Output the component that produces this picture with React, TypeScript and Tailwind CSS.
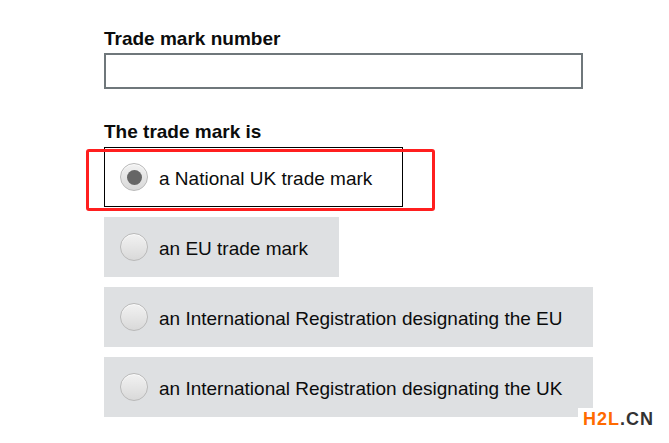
import React from "react";

// Trade mark form step: number field plus a block-label radio group.
// The red box and the H2L.CN mark are annotations on top of the page.

const options = [
  { label: "a National UK trade mark", checked: true },
  { label: "an EU trade mark", checked: false },
  { label: "an International Registration designating the EU", checked: false },
  { label: "an International Registration designating the UK", checked: false },
];

function Radio({ checked }: { checked: boolean }) {
  return (
    <span className="flex h-[28px] w-[28px] shrink-0 items-center justify-center rounded-full border border-[#b9b9b9] bg-gradient-to-b from-[#f2f2f2] to-[#d9d9d9] shadow-[inset_0_1px_1px_rgba(255,255,255,0.8)]">
      {checked && <span className="h-[15px] w-[15px] rounded-full bg-[#666666]" />}
    </span>
  );
}

export default function App() {
  return (
    <div className="relative min-h-screen bg-white pl-[104px] pt-[26px] font-['Liberation_Sans',Arial,sans-serif] text-[#0b0c0c]">
      <label className="block text-[19px] font-bold leading-[25px]">Trade mark number</label>
      <div className="mt-[2px] h-[36px] w-[479px] border-2 border-[#6f777b] bg-white" />

      <div className="mt-[30px] text-[19px] font-bold leading-[25px]">The trade mark is</div>

      <div className="mt-[3px] flex flex-col items-start gap-[10px]">
        {options.map((o) => (
          <label
            key={o.label}
            className={
              "flex h-[60px] items-center border pl-[15px] pr-[30px] text-[19px] leading-[25px] " +
              (o.checked ? "border-black bg-white" : "border-[#dee0e2] bg-[#dee0e2]")
            }
          >
            <Radio checked={o.checked} />
            <span className="ml-[11px] whitespace-nowrap pt-[2px]">{o.label}</span>
          </label>
        ))}
      </div>

      <div className="absolute left-[86px] top-[149px] h-[62px] w-[349px] rounded-[3px] border-[3px] border-[#ff1f1f]" />

      <div className="absolute left-[578px] top-[408px] bg-white pl-[5px] pr-[12px] text-[18px] font-bold leading-[22px] tracking-[1px]">
        <span className="text-[#ff6a00]">H2L</span>
        <span className="text-[#333333]">.CN</span>
      </div>
    </div>
  );
}
